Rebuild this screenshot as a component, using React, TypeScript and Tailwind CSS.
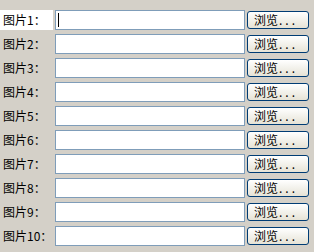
const rows = Array.from({ length: 10 }, (_, i) => i + 1);

export default function App() {
  return (
    <div
      className="h-[252px] w-[314px] overflow-hidden bg-[#d4d0c8] pt-[10px] text-[12px] leading-none text-black"
      style={{ fontFamily: '"Noto Sans CJK SC", "DejaVu Sans", sans-serif' }}
    >
      <div className="flex flex-col gap-[4px]">
        {rows.map((n) => (
          <div key={n} className="flex h-[20px] items-center">
            <div
              className={`flex h-[20px] w-[53px] items-center pl-[3px] ${n === 1 ? 'bg-white' : ''}`}
            >
              图片{n}：
            </div>
            <div className="ml-[2px] flex h-[20px] w-[190px] items-center border border-[#7f9db9] bg-white pl-[2px]">
              {n === 1 && <span className="h-[14px] w-[1px] bg-black" />}
            </div>
            <button className="ml-[2px] flex h-[18px] w-[62px] items-center rounded-[3px] border border-[#003c74] bg-gradient-to-b from-white to-[#e6e3d6] pl-[6px] text-[12px] tracking-[0px]">
              浏览<span className="ml-[1px] tracking-[3px]">...</span>
            </button>
          </div>
        ))}
      </div>
    </div>
  );
}
